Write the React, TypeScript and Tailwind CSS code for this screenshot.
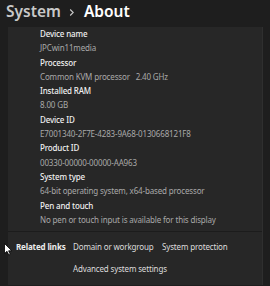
import React from "react";

const rows: [string, string][] = [
  ["Device name", "JPCwin11media"],
  ["Processor", "Common KVM processor   2.40 GHz"],
  ["Installed RAM", "8.00 GB"],
  ["Device ID", "E7001340-2F7E-4283-9A68-0130668121F8"],
  ["Product ID", "00330-00000-00000-AA963"],
  ["System type", "64-bit operating system, x64-based processor"],
  ["Pen and touch", "No pen or touch input is available for this display"],
];

export default function App() {
  return (
    <div
      className="relative w-[270px] h-[286px] overflow-hidden bg-[#1e1e1e] text-white"
      style={{ fontFamily: '"Noto Sans", "Open Sans", sans-serif' }}
    >
      <div className="h-[28px] flex items-center pl-[6px] pb-[5px]">
        <span className="text-[15.5px] font-semibold text-[#c9c9c9] leading-none">System</span>
        <svg width="6" height="9" viewBox="0 0 6 9" className="ml-[8px] mr-[9px] mt-[1px]">
          <path d="M1.2 1.5 L4.2 4.5 L1.2 7.5" stroke="#c9c9c9" strokeWidth="1.1" fill="none" />
        </svg>
        <span className="text-[15.5px] font-semibold text-white leading-none">About</span>
      </div>
      <div className="ml-[8px] w-[255px] h-[258px] bg-[#272727] border-r border-[#2f2f2f]">
        <div className="pl-[32px] mt-[-1px] pb-[4px] border-b border-[#1c1c1c]">
          {rows.map(([k, v]) => (
            <div key={k}>
              <div className="text-[8px] leading-[14.3px] tracking-[-0.15px] text-[#f0f0f0] font-medium whitespace-nowrap">{k}</div>
              <div className="text-[8px] leading-[14.3px] tracking-[-0.15px] text-[#a9a9a9] whitespace-pre">{v}</div>
            </div>
          ))}
        </div>
        <div className="pt-[8px] text-[8px] leading-[14px] tracking-[-0.15px] whitespace-nowrap">
          <div className="flex">
            <span className="ml-[8px] w-[57px] font-bold text-[#ececec]">Related links</span>
            <span className="w-[89px] text-[#dcdcdc]">Domain or workgroup</span>
            <span className="text-[#dcdcdc]">System protection</span>
          </div>
          <div className="mt-[8px] ml-[65px] text-[#dcdcdc]">Advanced system settings</div>
        </div>
      </div>
      <svg className="absolute left-[4px] top-[243px]" width="9" height="13" viewBox="0 0 9 13">
        <path d="M0.5 0.5 L0.5 10.5 L3 8.3 L4.8 12 L6.3 11.3 L4.6 7.8 L7.8 7.8 Z" fill="white" stroke="black" strokeWidth="0.8" />
      </svg>
    </div>
  );
}
